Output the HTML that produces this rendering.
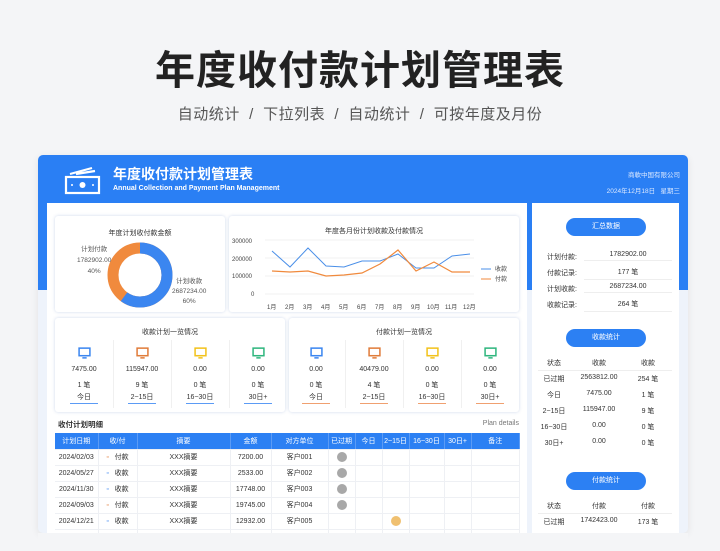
<!DOCTYPE html><html><head><meta charset="utf-8"><style>
*{margin:0;padding:0;box-sizing:border-box}
body{width:720px;height:551px;background:#f4f5f7;font-family:"Liberation Sans","Noto Sans CJK SC",sans-serif;position:relative;overflow:hidden;color:#333}
.a{position:absolute}
.s{font-size:7px;white-space:nowrap}
.panel{position:absolute;background:#fff;border-radius:3px;box-shadow:0 0 3px rgba(60,100,180,.25)}
.c{text-align:center}
table{border-collapse:collapse;font-size:7px}
td,th{height:16px;text-align:center;border-right:1px solid #eef0f4;border-bottom:1px solid #eef0f4;font-weight:normal;white-space:nowrap}
th{background:#2c80f3;color:#fff;border-right:1px solid #5b9bf5}
.btn{position:absolute;left:566px;width:80px;height:18px;background:#2c80f3;border-radius:9px;color:#fff;font-size:7px;text-align:center;line-height:18px}
.dot{display:inline-block;width:10px;height:10px;border-radius:50%;background:#a8a8a8;vertical-align:middle}
</style></head><body>
<div class="a c" style="left:0;width:720px;top:38px;font-size:40px;font-weight:bold;color:#222;letter-spacing:1px">年度收付款计划管理表</div>
<div class="a c" style="left:0;width:720px;top:103px;font-size:15px;color:#555;letter-spacing:.5px">自动统计 &nbsp;/ &nbsp;下拉列表 &nbsp;/ &nbsp;自动统计 &nbsp;/ &nbsp;可按年度及月份</div>

<div class="a" style="left:38px;top:155px;width:650px;height:378px;background:#eef3fb;border-radius:5px;box-shadow:0 2px 8px rgba(0,0,0,.08);overflow:hidden">
 <div class="a" style="left:0;top:0;width:650px;height:135px;background:#2a7ff4"></div>
</div>
<svg class="a" style="left:64px;top:165px" width="38" height="32" viewBox="0 0 38 32" fill="none" stroke="#fff" stroke-width="2.2">
<rect x="2" y="12" width="33" height="16"/><path d="M6 9 L28 3 M12 9 L31 6"/><circle cx="18.5" cy="20" r="3" fill="#fff" stroke="none"/><circle cx="8" cy="20" r="1" fill="#fff" stroke="none"/><circle cx="29" cy="20" r="1" fill="#fff" stroke="none"/></svg>
<div class="a" style="left:113px;top:164px;font-size:14px;font-weight:bold;color:#fff">年度收付款计划管理表</div>
<div class="a" style="left:113px;top:185px;font-size:7px;font-weight:bold;color:#fff">Annual Collection and Payment Plan Management</div>
<div class="a s" style="right:40px;top:169px;color:#dce9ff;font-size:6.5px">商軟中国有限公司</div>
<div class="a s" style="right:40px;top:185px;color:#dce9ff;font-size:6.5px">2024年12月18日 &nbsp; 星期三</div>

<div class="a" style="left:47px;top:203px;width:480px;height:330px;background:#fff"></div>
<div class="a" style="left:532px;top:203px;width:147px;height:330px;background:#fff"></div>

<div class="panel" style="left:55px;top:216px;width:170px;height:96px">
 <div class="a s c" style="left:0;width:170px;top:12px">年度计划收付款金额</div>
 <svg class="a" style="left:50px;top:24px" width="70" height="70" viewBox="0 0 70 70">
 <circle cx="35" cy="35" r="27" fill="none" stroke="#f08a3d" stroke-width="11"/>
 <circle cx="35" cy="35" r="27" fill="none" stroke="#3b86f0" stroke-width="11" stroke-dasharray="101.8 200" transform="rotate(-90 35 35)"/></svg>
 <div class="a s" style="left:22px;top:28px;font-size:6.5px;color:#555;line-height:11px;text-align:center">计划付款<br>1782902.00<br>40%</div>
 <div class="a s" style="left:117px;top:61px;font-size:6.5px;color:#555;line-height:10px;text-align:center">计划收款<br>2687234.00<br>60%</div>
</div>
<div class="panel" style="left:229px;top:216px;width:290px;height:96px">
 <div class="a s c" style="left:0;width:290px;top:10px">年度各月份计划收款及付款情况</div>
 <svg class="a" style="left:0;top:0" width="290" height="96" viewBox="0 0 290 96" font-size="6" fill="#444" font-family="Liberation Sans">
 <text x="3" y="27">300000</text><text x="3" y="45">200000</text><text x="3" y="62">100000</text><text x="22" y="80">0</text>
 <g stroke="#f0f0f0"><line x1="36" y1="24" x2="245" y2="24"/><line x1="36" y1="42" x2="245" y2="42"/><line x1="36" y1="60" x2="245" y2="60"/><line x1="36" y1="78" x2="245" y2="78"/></g>
 <polyline fill="none" stroke="#4a8fe8" stroke-width="1" points="43,35 61,51 79,32 97,50 115,51 133,45 151,45 169,38 187,52 205,52 223,40 241,38"/>
 <polyline fill="none" stroke="#f08a3d" stroke-width="1.2" points="43,55 61,56 79,55 97,60 115,59 133,57 151,48 169,34 187,55 205,46 223,56 241,56"/>
 <g font-size="6"><text x="38" y="93">1月</text><text x="56" y="93">2月</text><text x="74" y="93">3月</text><text x="92" y="93">4月</text><text x="110" y="93">5月</text><text x="128" y="93">6月</text><text x="146" y="93">7月</text><text x="164" y="93">8月</text><text x="182" y="93">9月</text><text x="198" y="93">10月</text><text x="216" y="93">11月</text><text x="234" y="93">12月</text></g>
 <line x1="252" y1="53" x2="262" y2="53" stroke="#4a8fe8"/><text x="266" y="55">收款</text>
 <line x1="252" y1="63" x2="262" y2="63" stroke="#f08a3d"/><text x="266" y="65">付款</text>
 </svg>
</div>

<div class="panel" style="left:55px;top:318px;width:230px;height:94px"></div>
<div class="panel" style="left:289px;top:318px;width:230px;height:94px"></div>
<div class="a s c" style="left:55px;width:230px;top:327px">收款计划一览情况</div>
<div class="a s c" style="left:289px;width:230px;top:327px">付款计划一览情况</div>
<svg width="0" height="0" style="position:absolute"><defs><symbol id="mon" viewBox="0 0 12 11"><rect x="1" y="1" width="10" height="7" fill="none" stroke-width="1.4" stroke="currentColor"/><path d="M4 10h4" stroke="currentColor" stroke-width="1.4"/></symbol></defs></svg>
<div id="st"></div>
<script>
var cols=[["#3b86f0"],["#e07c3a"],["#f2c21b"],["#2fb67e"]];
var L=[["7475.00","1 笔","今日"],["115947.00","9 笔","2~15日"],["0.00","0 笔","16~30日"],["0.00","0 笔","30日+"]];
var R=[["0.00","0 笔","今日"],["40479.00","4 笔","2~15日"],["0.00","0 笔","16~30日"],["0.00","0 笔","30日+"]];
var h="";
function blk(x0,d,u){for(var i=0;i<4;i++){var cx=x0+i*58;
h+='<svg class="a" style="left:'+(cx-6)+'px;top:347px;color:'+cols[i][0]+'" width="13" height="12"><use href="#mon"/></svg>';
h+='<div class="a s c" style="left:'+(cx-30)+'px;width:60px;top:366px">'+d[i][0]+'</div>';
h+='<div class="a s c" style="left:'+(cx-30)+'px;width:60px;top:380px">'+d[i][1]+'</div>';
h+='<div class="a s c" style="left:'+(cx-14)+'px;width:28px;top:392px;border-bottom:1px solid '+u+';padding-bottom:1px">'+d[i][2]+'</div>';
if(i<3)h+='<div class="a" style="left:'+(cx+29)+'px;top:340px;width:1px;height:68px;background:#f0f0f0"></div>';}}
blk(84,L,"#5b9bf5");blk(316,R,"#f0a070");
document.getElementById("st").innerHTML=h;
</script>

<div class="a" style="left:58px;top:419px;font-size:7.5px;font-weight:bold">收付计划明细</div>
<div class="a s" style="right:201px;top:420px;color:#777">Plan details</div>
<table class="a" style="left:55px;top:433px;width:465px">
<tr><th style="width:43px">计划日期</th><th style="width:39px">收/付</th><th style="width:93px">摘要</th><th style="width:41px">金额</th><th style="width:57px">对方单位</th><th style="width:27px">已过期</th><th style="width:27px">今日</th><th style="width:27px">2~15日</th><th style="width:35px">16~30日</th><th style="width:27px">30日+</th><th>备注</th></tr>
<tr><td>2024/02/03</td><td><span style="color:#e07c3a">▫</span> &nbsp; 付款</td><td>XXX摘要</td><td>7200.00</td><td>客户001</td><td><span class="dot"></span></td><td></td><td></td><td></td><td></td><td></td></tr>
<tr><td>2024/05/27</td><td><span style="color:#3b86f0">▫</span> &nbsp; 收款</td><td>XXX摘要</td><td>2533.00</td><td>客户002</td><td><span class="dot"></span></td><td></td><td></td><td></td><td></td><td></td></tr>
<tr><td>2024/11/30</td><td><span style="color:#3b86f0">▫</span> &nbsp; 收款</td><td>XXX摘要</td><td>17748.00</td><td>客户003</td><td><span class="dot"></span></td><td></td><td></td><td></td><td></td><td></td></tr>
<tr><td>2024/09/03</td><td><span style="color:#e07c3a">▫</span> &nbsp; 付款</td><td>XXX摘要</td><td>19745.00</td><td>客户004</td><td><span class="dot"></span></td><td></td><td></td><td></td><td></td><td></td></tr>
<tr><td>2024/12/21</td><td><span style="color:#3b86f0">▫</span> &nbsp; 收款</td><td>XXX摘要</td><td>12932.00</td><td>客户005</td><td></td><td></td><td><span class="dot" style="background:#f0c070"></span></td><td></td><td></td><td></td></tr>
<tr><td></td><td></td><td></td><td></td><td></td><td></td><td></td><td></td><td></td><td></td><td></td></tr>
</table>
<div class="a" style="left:38px;top:533px;width:650px;height:18px;background:#f4f5f7"></div>

<div class="btn" style="top:218px">汇总数据</div>
<div class="a s" style="left:547px;top:252px">计划付款:</div><div class="a s c" style="left:584px;width:88px;top:251px;border-bottom:1px solid #eee;padding-bottom:2px">1782902.00</div>
<div class="a s" style="left:547px;top:268px">付款记录:</div><div class="a s c" style="left:584px;width:88px;top:267px;border-bottom:1px solid #eee;padding-bottom:2px">177 笔</div>
<div class="a s" style="left:547px;top:284px">计划收款:</div><div class="a s c" style="left:584px;width:88px;top:283px;border-bottom:1px solid #eee;padding-bottom:2px">2687234.00</div>
<div class="a s" style="left:547px;top:300px">收款记录:</div><div class="a s c" style="left:584px;width:88px;top:299px;border-bottom:1px solid #eee;padding-bottom:2px">264 笔</div>
<div class="btn" style="top:329px">收款统计</div>
<div id="rt"></div>
<div class="btn" style="top:472px">付款统计</div>
<script>
var r=[["状态","收款","收款"],["已过期","2563812.00","254 笔"],["今日","7475.00","1 笔"],["2~15日","115947.00","9 笔"],["16~30日","0.00","0 笔"],["30日+","0.00","0 笔"]];
var p=[["状态","付款","付款"],["已过期","1742423.00","173 笔"]];
var g="";var xs=[538,570,628],ws=[32,58,40];
function rows(a,y0){for(var i=0;i<a.length;i++){for(var j=0;j<3;j++)g+='<div class="a s c" style="left:'+xs[j]+'px;width:'+ws[j]+'px;top:'+(y0+i*16)+'px">'+a[i][j]+'</div>';
if(i==0)g+='<div class="a" style="left:538px;top:'+(y0+12)+'px;width:134px;height:1px;background:#eee"></div>';}}
rows(r,358);rows(p,501);
document.getElementById("rt").innerHTML=g;
</script>
</body></html>
